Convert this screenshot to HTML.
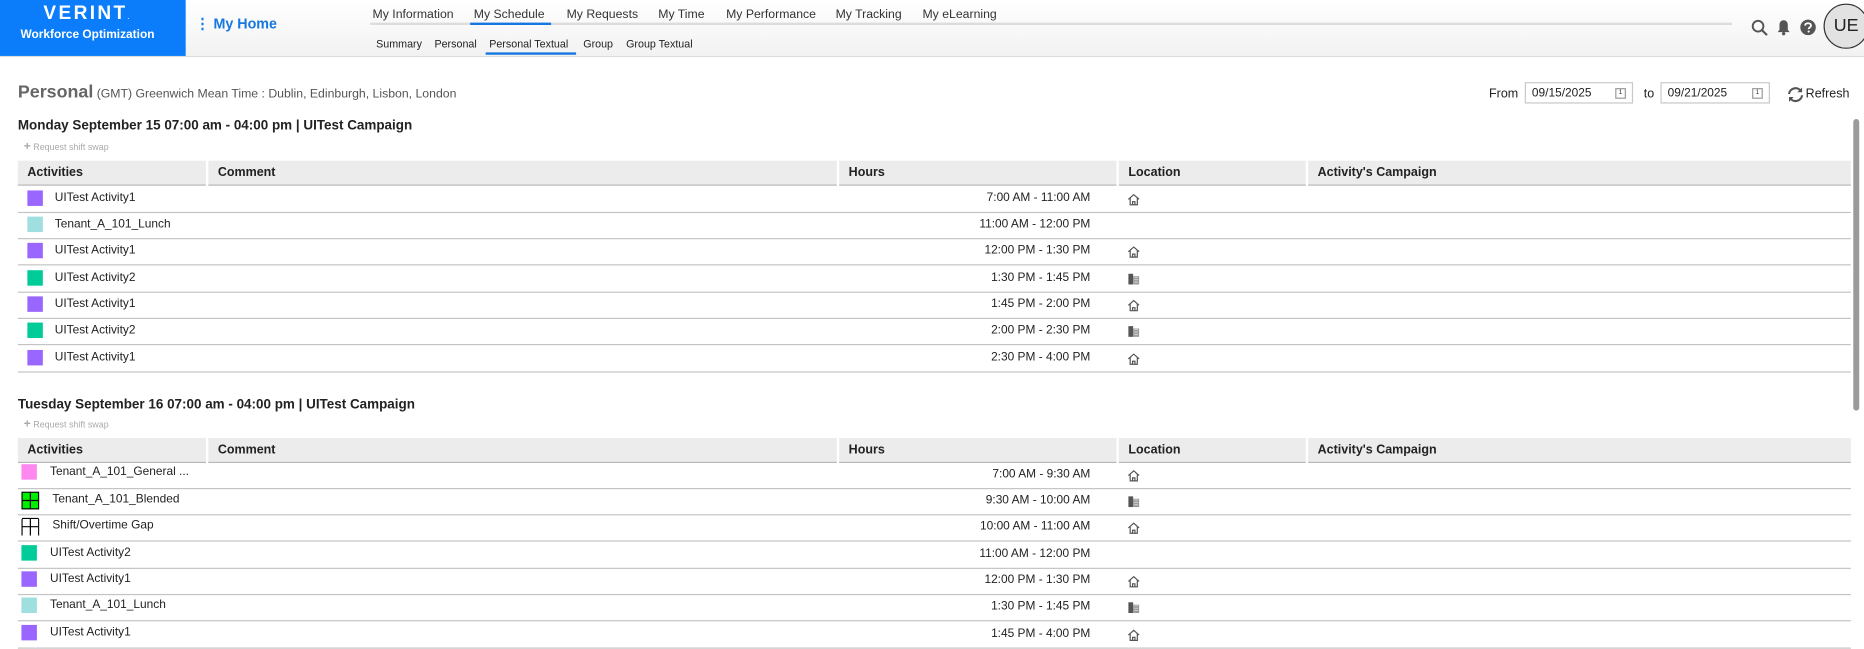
<!DOCTYPE html>
<html><head><meta charset="utf-8"><style>
html,body{margin:0;padding:0;width:1864px;height:648px;overflow:hidden;background:#fff;}
#w{position:absolute;left:0;top:0;width:1566px;height:545px;transform:scale(1.19029);transform-origin:0 0;font-family:"Liberation Sans",Arial,sans-serif;color:#222;}
.a{position:absolute;white-space:nowrap;}
#hdr{position:absolute;left:0;top:0;width:1566px;height:47px;background:linear-gradient(#fff,#f2f2f2);border-bottom:1px solid #ddd;}
#logo{position:absolute;left:0;top:0;width:156px;height:47px;background:#0b7dfa;color:#fff;text-align:center;}
.nav{font-size:10.3px;color:#333;top:7px;}
.sub{font-size:9px;color:#222;top:32px;}
.th{position:absolute;height:21px;background:#ececec;border-bottom:1px solid #b8b8b8;font-size:10.5px;font-weight:bold;line-height:21px;padding-left:8px;box-sizing:border-box;}
.row{position:absolute;left:15px;width:1540px;height:22px;border-bottom:1px solid #c4c4c4;font-size:10px;}
.row span{position:absolute;top:5px;}
.sw{position:absolute;top:4px;width:13px;height:13px;}
.hr{position:absolute;right:0;width:902px;text-align:right;top:5px;}
</style></head><body><div id="w">
<div id="hdr"></div>
<div id="logo"><div class="a" style="left:0;width:147px;top:3px;font-size:16px;font-weight:bold;letter-spacing:2px">VERINT<span style="font-size:5px">.</span></div><div class="a" style="left:0;width:147px;top:24px;font-size:10px;font-weight:bold">Workforce Optimization</div></div>
<div class="a" style="left:164px;top:13px;font-size:12px;font-weight:bold;color:#1577e0">⋮ My Home</div>
<div class="a" style="left:311px;top:19px;width:1144px;height:2px;background:#dcdcdc"></div>
<div class="a" style="left:395px;top:19px;width:68px;height:2px;background:#1577e0"></div>
<div class="a nav" style="left:313px">My Information</div>
<div class="a nav" style="left:398px">My Schedule</div>
<div class="a nav" style="left:476px">My Requests</div>
<div class="a nav" style="left:553px">My Time</div>
<div class="a nav" style="left:610px">My Performance</div>
<div class="a nav" style="left:702px">My Tracking</div>
<div class="a nav" style="left:775px">My eLearning</div>
<div class="a sub" style="left:316px">Summary</div>
<div class="a sub" style="left:365px">Personal</div>
<div class="a sub" style="left:411px">Personal Textual</div>
<div class="a sub" style="left:490px">Group</div>
<div class="a sub" style="left:526px">Group Textual</div>
<div class="a" style="left:408px;top:44px;width:76px;height:2px;background:#1577e0"></div>
<svg class="a" style="left:1471px;top:16px" width="15" height="15" viewBox="0 0 15 15"><circle cx="6" cy="6" r="4.5" fill="none" stroke="#555" stroke-width="1.6"/><path d="M9.5 9.5L13.5 13.5" stroke="#555" stroke-width="1.8"/></svg>
<svg class="a" style="left:1492px;top:16px" width="13" height="14" viewBox="0 0 13 14"><path d="M6.5 1C4 1 3 3 3 5v4L1.5 11h10L10 9V5C10 3 9 1 6.5 1z" fill="#555"/><circle cx="6.5" cy="12.3" r="1.4" fill="#555"/></svg>
<svg class="a" style="left:1512px;top:16px" width="14" height="14" viewBox="0 0 14 14"><circle cx="7" cy="7" r="6.5" fill="#555"/><path d="M4.5 5.5C4.5 4 5.5 3.5 7 3.5s2.5.8 2.5 2c0 1.5-2 1.5-2 3" stroke="#fff" stroke-width="1.5" fill="none"/><circle cx="7.5" cy="10.5" r=".9" fill="#fff"/></svg>
<div class="a" style="left:1532px;top:3px;width:36px;height:36px;border-radius:50%;border:1.5px solid #333;background:#e2e2e2;font-size:15px;line-height:36px;text-align:center;color:#222">UE</div>
<div class="a" style="left:15px;top:69px;font-size:10.3px;color:#555"><b style="font-size:15px;color:#666">Personal</b> (GMT) Greenwich Mean Time : Dublin, Edinburgh, Lisbon, London</div>
<div class="a" style="left:1251px;top:73px;font-size:10.5px">From</div>
<div class="a" style="left:1281px;top:69px;width:91px;height:18px;border:1px solid #c8c8c8;font-size:10px;line-height:18px;box-sizing:border-box;padding-left:5px">09/15/2025<span style="position:absolute;right:5px;top:4px;width:7px;height:7px;border:1px solid #999;font-size:5px;line-height:7px;text-align:center">1</span></div>
<div class="a" style="left:1381px;top:73px;font-size:10.5px">to</div>
<div class="a" style="left:1395px;top:69px;width:92px;height:18px;border:1px solid #c8c8c8;font-size:10px;line-height:18px;box-sizing:border-box;padding-left:5px">09/21/2025<span style="position:absolute;right:5px;top:4px;width:7px;height:7px;border:1px solid #999;font-size:5px;line-height:7px;text-align:center">1</span></div>
<svg class="a" style="left:1501px;top:72px" width="15" height="15" viewBox="0 0 15 15"><path d="M2 7A5.5 5.5 0 0 1 12 4.5M13 8A5.5 5.5 0 0 1 3 10.5" fill="none" stroke="#555" stroke-width="1.8"/><path d="M13 1.5v4h-4zM2 13.5v-4h4z" fill="#555"/></svg>
<div class="a" style="left:1517px;top:73px;font-size:10.5px">Refresh</div>
<div class="a" style="left:1557px;top:100px;width:5px;height:245px;background:#9a9a9a;border-radius:3px"></div>

<svg width="0" height="0" style="position:absolute"><defs>
<symbol id="h" viewBox="0 0 11 11"><path d="M1 5.5L5.5 1.5 10 5.5M2.5 4.5V10H8.5V4.5M4.5 10V7.5H6.5V10" fill="none" stroke="#555" stroke-width="1"/></symbol>
<symbol id="b" viewBox="0 0 11 11"><rect x="1" y="1" width="4" height="9" fill="#555"/><rect x="5" y="3" width="5" height="7" fill="#9a9a9a"/><path d="M6 4h3M6 6h3M6 8h3" stroke="#ddd" stroke-width=".7"/></symbol>
</defs></svg>

<div class="a" style="left:15px;top:100px;font-size:11.3px;font-weight:bold">Monday September 15 07:00 am - 04:00 pm | UITest Campaign</div>
<div class="a" style="left:20px;top:118px;font-size:7.5px;color:#aaa"><b style="font-size:10px">+</b> Request shift swap</div>
<div class="th" style="left:15px;top:135px;width:158px">Activities</div>
<div class="th" style="left:175px;top:135px;width:528px">Comment</div>
<div class="th" style="left:705px;top:135px;width:233px">Hours</div>
<div class="th" style="left:940px;top:135px;width:157px">Location</div>
<div class="th" style="left:1099px;top:135px;width:456px">Activity's Campaign</div>

<div class="row" style="top:156px"><i class="sw" style="left:8px;background:#9966ff"></i><span style="left:31px">UITest Activity1</span><span class="hr" style="left:0;width:901px">7:00 AM - 11:00 AM</span><svg class="a" style="left:932px;top:6px" width="11" height="11"><use href="#h"/></svg></div>
<div class="row" style="top:178px"><i class="sw" style="left:8px;background:#a0dfe0"></i><span style="left:31px">Tenant_A_101_Lunch</span><span class="hr" style="left:0;width:901px">11:00 AM - 12:00 PM</span></div>
<div class="row" style="top:200px"><i class="sw" style="left:8px;background:#9966ff"></i><span style="left:31px">UITest Activity1</span><span class="hr" style="left:0;width:901px">12:00 PM - 1:30 PM</span><svg class="a" style="left:932px;top:6px" width="11" height="11"><use href="#h"/></svg></div>
<div class="row" style="top:223px"><i class="sw" style="left:8px;background:#00cc99"></i><span style="left:31px">UITest Activity2</span><span class="hr" style="left:0;width:901px">1:30 PM - 1:45 PM</span><svg class="a" style="left:932px;top:6px" width="11" height="11"><use href="#b"/></svg></div>
<div class="row" style="top:245px"><i class="sw" style="left:8px;background:#9966ff"></i><span style="left:31px">UITest Activity1</span><span class="hr" style="left:0;width:901px">1:45 PM - 2:00 PM</span><svg class="a" style="left:932px;top:6px" width="11" height="11"><use href="#h"/></svg></div>
<div class="row" style="top:267px"><i class="sw" style="left:8px;background:#00cc99"></i><span style="left:31px">UITest Activity2</span><span class="hr" style="left:0;width:901px">2:00 PM - 2:30 PM</span><svg class="a" style="left:932px;top:6px" width="11" height="11"><use href="#b"/></svg></div>
<div class="row" style="top:290px"><i class="sw" style="left:8px;background:#9966ff"></i><span style="left:31px">UITest Activity1</span><span class="hr" style="left:0;width:901px">2:30 PM - 4:00 PM</span><svg class="a" style="left:932px;top:6px" width="11" height="11"><use href="#h"/></svg></div>

<div class="a" style="left:15px;top:334px;font-size:11.3px;font-weight:bold">Tuesday September 16 07:00 am - 04:00 pm | UITest Campaign</div>
<div class="a" style="left:20px;top:351px;font-size:7.5px;color:#aaa"><b style="font-size:10px">+</b> Request shift swap</div>
<div class="th" style="left:15px;top:368px;width:158px">Activities</div>
<div class="th" style="left:175px;top:368px;width:528px">Comment</div>
<div class="th" style="left:705px;top:368px;width:233px">Hours</div>
<div class="th" style="left:940px;top:368px;width:157px">Location</div>
<div class="th" style="left:1099px;top:368px;width:456px">Activity's Campaign</div>

<div class="row" style="top:388px"><i class="sw" style="left:3px;background:#ff88f0;top:2px"></i><span style="left:27px;top:3px">Tenant_A_101_General ...</span><span class="hr" style="left:0;width:901px">7:00 AM - 9:30 AM</span><svg class="a" style="left:932px;top:6px" width="11" height="11"><use href="#h"/></svg></div>
<div class="row" style="top:410px"><svg class="a" style="left:3px;top:3px" width="15" height="15"><rect x=".5" y=".5" width="14" height="14" fill="#00ee00" stroke="#000"/><path d="M7.5 0v15M0 7.5h15" stroke="#000"/></svg><span style="left:29px;top:4px">Tenant_A_101_Blended</span><span class="hr" style="left:0;width:901px">9:30 AM - 10:00 AM</span><svg class="a" style="left:932px;top:6px" width="11" height="11"><use href="#b"/></svg></div>
<div class="row" style="top:432px"><svg class="a" style="left:3px;top:3px" width="15" height="15"><path d="M.5 1V15M14.5 1V15M.5 .5h14M7.5 0v15M0 7.5h15" stroke="#000" fill="none"/></svg><span style="left:29px;top:4px">Shift/Overtime Gap</span><span class="hr" style="left:0;width:901px">10:00 AM - 11:00 AM</span><svg class="a" style="left:932px;top:6px" width="11" height="11"><use href="#h"/></svg></div>
<div class="row" style="top:455px"><i class="sw" style="left:3px;background:#00cc99;top:3px"></i><span style="left:27px;top:4px">UITest Activity2</span><span class="hr" style="left:0;width:901px">11:00 AM - 12:00 PM</span></div>
<div class="row" style="top:477px"><i class="sw" style="left:3px;background:#9966ff;top:3px"></i><span style="left:27px;top:4px">UITest Activity1</span><span class="hr" style="left:0;width:901px">12:00 PM - 1:30 PM</span><svg class="a" style="left:932px;top:6px" width="11" height="11"><use href="#h"/></svg></div>
<div class="row" style="top:499px"><i class="sw" style="left:3px;background:#a0dfe0;top:3px"></i><span style="left:27px;top:4px">Tenant_A_101_Lunch</span><span class="hr" style="left:0;width:901px">1:30 PM - 1:45 PM</span><svg class="a" style="left:932px;top:6px" width="11" height="11"><use href="#b"/></svg></div>
<div class="row" style="top:522px"><i class="sw" style="left:3px;background:#9966ff;top:3px"></i><span style="left:27px;top:4px">UITest Activity1</span><span class="hr" style="left:0;width:901px">1:45 PM - 4:00 PM</span><svg class="a" style="left:932px;top:6px" width="11" height="11"><use href="#h"/></svg></div>
</div></body></html>
